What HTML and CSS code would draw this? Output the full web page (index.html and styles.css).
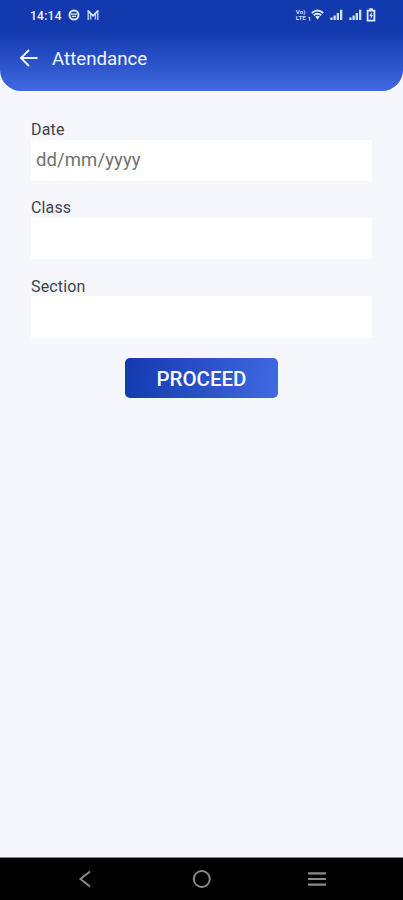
FILE: index.html
```html
<!DOCTYPE html>
<html lang="en">
<head>
<meta charset="utf-8">
<title>Attendance</title>
<link rel="stylesheet" href="styles.css">
</head>
<body>
<header class="header">
  <div class="status">
    <span class="time">14:14</span>
    <svg class="notif" width="12" height="12" viewBox="0 0 12 12"><circle cx="6" cy="6" r="4.500" fill="none" stroke="#dce6fb" stroke-width="2"/><path d="M3 5.200h6M4 7.400h4" stroke="#dce6fb" stroke-width="1.300"/></svg>
    <svg class="mail" width="12" height="12" viewBox="0 0 12 12"><path d="M1.200 1v10M10.800 1v10M3.600 10.500V4M8.400 10.500V4" stroke="#b4c7f4" stroke-width="1.500"/><path d="M1.200 1.800L6 6.800l4.800-5" fill="none" stroke="#dce6fb" stroke-width="1.700"/></svg>
    <div class="signals">
      <span class="volte"><span>Vo)</span><span>LTE</span></span><span class="sim">1</span>
      <svg class="wifi" width="13" height="12" viewBox="0 0 13 12"><path d="M.8 4Q6.500-.8 12.200 4M2.700 6.200q3.800-3 7.600 0" fill="none" stroke="#e0e9fc" stroke-width="1.900"/><path d="M4.200 7.500q2.300-1.500 4.600 0L6.500 10.800z" fill="#e0e9fc"/></svg>
      <svg class="bars" width="13" height="12" viewBox="0 0 13 12"><path d="M.3 8.500h2.300V11H.3zM3.500 6.500h2.300V11H3.500zM6.700 4H9v7H6.700zM10 .8h2.300V11H10z" fill="#d4e0fa"/></svg>
      <svg class="bars" width="13" height="12" viewBox="0 0 13 12"><path d="M.3 8.500h2.300V11H.3zM3.500 6.500h2.300V11H3.500zM6.700 4H9v7H6.700zM10 .8h2.300V11H10z" fill="#d4e0fa"/></svg>
      <svg class="battery" width="10" height="14" viewBox="0 0 10 14"><path d="M3.200 1.200h3.600M1.600 2.600h6.800v10H1.600z" fill="none" stroke="#e6eefc" stroke-width="1.800"/><path d="M5.700 4L3.400 8h1.300v3L7 7H5.700z" fill="#e6eefc"/></svg>
    </div>
  </div>
  <div class="titlebar">
    <svg width="20" height="20" viewBox="0 0 20 20"><path d="M18.500 10H2.200M10 2L2 10l8 8" fill="none" stroke="#f2f6ff" stroke-width="1.900"/></svg>
    <h1>Attendance</h1>
  </div>
</header>
<main class="form">
  <div class="field"><label for="date">Date</label><input id="date" type="text" placeholder="dd/mm/yyyy"></div>
  <div class="field"><label for="class">Class</label><input id="class" type="text"></div>
  <div class="field"><label for="section">Section</label><input id="section" type="text"></div>
  <button class="proceed" type="button">PROCEED</button>
</main>
<nav class="navbar">
  <svg width="20" height="20" viewBox="0 0 20 20"><path d="M15 2.500L5.500 10l9.500 7.500" fill="none" stroke="#898989" stroke-width="2"/></svg>
  <svg width="20" height="20" viewBox="0 0 20 20"><circle cx="10.800" cy="10" r="8" fill="none" stroke="#898989" stroke-width="2"/></svg>
  <svg width="20" height="20" viewBox="0 0 20 20"><path d="M1 4.300h18M1 10h18M1 15.700h18" stroke="#898989" stroke-width="2.200"/></svg>
</nav>
</body>
</html>
```
FILE: styles.css
```css
* { box-sizing: border-box; }
body {
  margin: 0;
  height: 900px;
  display: flex;
  flex-direction: column;
  background: #f5f7fc;
  font-family: Roboto, "Liberation Sans", sans-serif;
  overflow: hidden;
}
.header {
  height: 91px;
  flex: none;
  border-radius: 0 0 21px 21px;
  background: linear-gradient(#1239ae 0, #1239ae 33%, #4068e0 100%);
  color: #eff4ff;
}
.status {
  height: 30px;
  padding: 0 27px 0 30px;
  display: flex;
  align-items: center;
}
.time { font-size: 12px; font-weight: 500; letter-spacing: .25px; width: 38px; padding-top: 1px; }
.mail { margin-left: 7px; }
.signals { margin-left: auto; display: flex; align-items: center; }
.volte {
  display: flex;
  flex-direction: column;
  font-size: 5.500px;
  font-weight: 700;
  color: #cbd9f8;
  transform: scaleX(1.150);
  transform-origin: right;
}
.volte span { height: 6px; line-height: 6px; }
.sim { font-size: 5px; font-weight: 700; align-self: flex-end; width: 5px; line-height: 6px; padding-left: 2px; }
.wifi { margin-right: 6px; }
.bars { margin-right: 6px; }
.battery { margin-left: -2px; }
.titlebar {
  display: flex;
  align-items: center;
  height: 56px;
  padding-left: 19px;
  gap: 13px;
}
.titlebar h1 { margin: 0; padding-top: 1px; font-size: 18.700px; font-weight: 400; }
.form {
  flex: 1;
  padding: 28px 31px 0;
  display: flex;
  flex-direction: column;
}
.field { height: 78.300px; display: flex; flex-direction: column; }
.field label {
  height: 20.600px;
  line-height: 21px;
  font-size: 16px;
  letter-spacing: .15px;
  color: #40434a;
}
.field input {
  width: 100%;
  height: 41.500px;
  padding: 0 5px;
  border: 0;
  background: #fff;
  font: 18.500px Roboto, "Liberation Sans", sans-serif;
  letter-spacing: .1px;
}
.field input::placeholder { color: #707070; opacity: 1; }
.proceed {
  align-self: center;
  width: 153px;
  height: 40px;
  margin-top: 4px;
  padding: 2px 0 0;
  border: 0;
  border-radius: 5px;
  background: linear-gradient(100deg, #1239ae, #4169e1);
  color: #f7f9ff;
  font: 500 20.500px Roboto, "Liberation Sans", sans-serif;
}
.navbar {
  height: 43px;
  flex: none;
  border-top: 1px solid #85868a;
  background: #000;
  display: flex;
  align-items: center;
  justify-content: space-between;
  padding: 0 76px 0 75px;
}
```
